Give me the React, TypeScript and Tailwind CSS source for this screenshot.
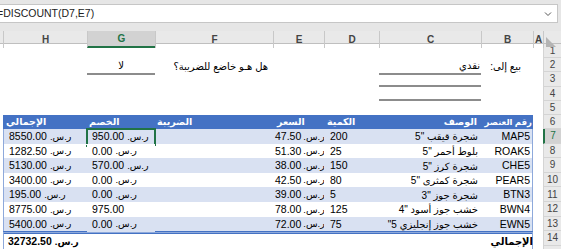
import React from 'react'

const GRID = 'grid grid-cols-[3px_84px_68px_118px_51px_55px_102px_52px_10px_18px]'
const FONT = { fontFamily: '"Liberation Sans", Arial, "DejaVu Sans", sans-serif' }
const AR = 'text-[10px]'

type Item = {
  id: string
  desc: string
  qty: string
  price: string
  disc: string
  discCur: boolean
  total: string
}

// descriptions are in logical order for an rtl run
const items: Item[] = [
  { id: 'MAP5', desc: 'شجرة قيقب "5', qty: '200', price: '47.50', disc: '950.00', discCur: true, total: '8550.00' },
  { id: 'ROAK5', desc: 'بلوط أحمر "5', qty: '25', price: '51.30', disc: '0.00', discCur: true, total: '1282.50' },
  { id: 'CHE5', desc: 'شجرة كرز "5', qty: '150', price: '38.00', disc: '570.00', discCur: true, total: '5130.00' },
  { id: 'PEAR5', desc: 'شجرة كمثرى "5', qty: '80', price: '42.50', disc: '0.00', discCur: true, total: '3400.00' },
  { id: 'BTN3', desc: 'شجرة جوز "3', qty: '5', price: '39.00', disc: '0.00', discCur: true, total: '195.00' },
  { id: 'BWN4', desc: 'خشب جوز أسود "4', qty: '125', price: '78.00', disc: '975.00', discCur: false, total: '8775.00' },
  { id: 'EWN5', desc: 'خشب جوز إنجليزي 5"', qty: '75', price: '72.00', disc: '0.00', discCur: true, total: '5400.00' },
]

function Money({ v, cur = true, bold = false, gap = 'gap-[3px]' }: { v: string; cur?: boolean; bold?: boolean; gap?: string }) {
  return (
    <span className={`flex items-center ${gap} ${bold ? 'font-bold' : ''}`}>
      <span>{v}</span>
      {cur && (
        <span dir="rtl" className="text-[9.5px]">
          ر.س.
        </span>
      )}
    </span>
  )
}

function RowHead({ n, active = false, h }: { n?: string; active?: boolean; h: string }) {
  return (
    <div
      className={`${h} flex items-center justify-center border-b border-l border-[#d4d4d4] text-[10px] ${
        active ? 'bg-[#d2d2d2] text-[#217346] border-l-2 border-l-[#217346]' : 'bg-[#e9e9e9] text-[#444]'
      }`}
    >
      {n}
    </div>
  )
}

function ColHead({ l, active = false }: { l: string; active?: boolean }) {
  return (
    <div
      className={`flex items-center justify-center border-l border-[#c8c8c8] text-[10px] font-bold ${
        active ? 'bg-[#d2d2d2] text-[#217346] border-b-2 border-b-[#217346]' : 'text-[#444]'
      }`}
    >
      {l}
    </div>
  )
}

// children must fill the nine sheet columns I..A
function Plain({ n, children }: { n: string; children?: React.ReactNode }) {
  return (
    <div className={`${GRID} h-[14.2px]`}>
      {children}
      <RowHead n={n} h="h-[14.2px]" />
    </div>
  )
}

function Underlined() {
  return (
    <>
      <div className="col-span-6" />
      <div className="border-b-2 border-[#8c8c8c]" />
      <div className="col-span-2" />
    </>
  )
}

export default function App() {
  return (
    <div className="w-[561px] h-[249px] overflow-hidden bg-white text-[10.5px] text-black" style={FONT}>
      {/* formula bar */}
      <div className="h-[31px] bg-[#e6e6e6] pt-[4px] pr-[3px]">
        <div className="h-[19px] bg-white border border-l-0 border-[#c6c6c6] flex items-center justify-between pr-[5px]">
          <span className="-ml-[3px] text-[10.5px] text-[#222]">=DISCOUNT(D7,E7)</span>
          <svg width="8" height="6" viewBox="0 0 8 6">
            <path d="M1 1.5 L4 4.5 L7 1.5" fill="none" stroke="#555" strokeWidth="1" />
          </svg>
        </div>
      </div>

      {/* column headers */}
      <div className={`${GRID} h-[13px] bg-[#e9e9e9] border-b border-[#bfbfbf]`}>
        <div />
        <ColHead l="H" />
        <ColHead l="G" active />
        <ColHead l="F" />
        <ColHead l="E" />
        <ColHead l="D" />
        <ColHead l="C" />
        <ColHead l="B" />
        <ColHead l="A" />
        <div className="relative border-l border-[#c8c8c8]">
          <svg className="absolute left-[2px] bottom-[1px]" width="10" height="10" viewBox="0 0 10 10">
            <path d="M0 10 L0 0 L10 10 Z" fill="#b4b4b4" />
          </svg>
        </div>
      </div>

      <Plain n="1">
        <div className="col-span-9" />
      </Plain>
      <Plain n="2">
        <div className="col-span-2" />
        <div className={`flex items-center justify-center border-b-2 border-[#8c8c8c] ${AR}`}>
          <span dir="rtl">لا</span>
        </div>
        <div className={`flex items-center justify-end pr-[5px] overflow-hidden whitespace-nowrap ${AR}`}>
          <span dir="rtl">هل هـو خاضع للضريبة؟</span>
        </div>
        <div />
        <div />
        <div className={`flex items-center justify-end pr-[1px] border-b-2 border-[#8c8c8c] ${AR}`}>
          <span dir="rtl">نقدي</span>
        </div>
        <div className={`flex items-center justify-end pr-[12px] whitespace-nowrap ${AR}`}>
          <span dir="rtl">بيع إلى:</span>
        </div>
        <div />
      </Plain>
      <Plain n="3">
        <Underlined />
      </Plain>
      <Plain n="4">
        <Underlined />
      </Plain>
      <Plain n="5">
        <div className="col-span-9" />
      </Plain>

      {/* table header */}
      <div className={`${GRID} h-[14px]`}>
        <div />
        <div className="col-span-7 grid grid-cols-[84px_68px_118px_51px_55px_102px_52px] bg-[#4472c4] text-white font-bold whitespace-nowrap text-[9.5px]">
          <div className="flex items-center pl-[3px]"><span dir="rtl">الإجمالي</span></div>
          <div className="flex items-center pl-[2px]"><span dir="rtl">الخصم</span></div>
          <div className="flex items-center pl-[2px]"><span dir="rtl">الضريبة</span></div>
          <div className="flex items-center pl-[4px]"><span dir="rtl">السعر</span></div>
          <div className="flex items-center pl-[3px]"><span dir="rtl">الكمية</span></div>
          <div className="flex items-center justify-end pr-[4px]"><span dir="rtl">الوصف</span></div>
          <div className="flex items-center justify-end pr-[1px] text-[8.5px]"><span dir="rtl">رقم العنصر</span></div>
        </div>
        <div />
        <RowHead n="6" h="h-[14px]" />
      </div>

      {items.map((it, i) => {
        const bg = i % 2 === 0 ? 'bg-[#d9e1f2]' : 'bg-white'
        const c = `${bg} border-b border-[#8ea9db] flex items-center whitespace-nowrap overflow-hidden`
        return (
          <div key={it.id} className={`${GRID} h-[14.6px]`}>
            <div />
            <div className={`${c} border-l pl-[5px]`}>
              <Money v={it.total} />
            </div>
            <div className={`${c} relative overflow-visible pl-[5px]`}>
              <Money v={it.disc} cur={it.discCur} />
              {i === 0 && (
                <>
                  <div className="absolute -left-[1px] -right-[1px] -top-[1px] -bottom-[1px] border-2 border-[#217346]" />
                  <div className="absolute -left-[2px] -bottom-[3px] w-[4px] h-[4px] bg-[#217346] border border-white" />
                </>
              )}
            </div>
            <div className={c} />
            <div className={`${c} pl-[2px]`}>
              <Money v={it.price} gap="gap-[2px]" />
            </div>
            <div className={`${c} pl-[6px]`}>{it.qty}</div>
            <div className={`${c} justify-end pr-[3px] ${AR}`}>
              <span dir="rtl">{it.desc}</span>
            </div>
            <div className={`${c} border-r justify-end pr-[2px]`}>{it.id}</div>
            <div />
            <RowHead n={String(7 + i)} active={i === 0} h="h-[14.6px]" />
          </div>
        )
      })}

      {/* total row */}
      <div className={`${GRID} h-[14.6px]`}>
        <div />
        <div className="col-span-7 grid grid-cols-[84px_68px_118px_51px_55px_102px_52px] border-t-[3px] border-double border-[#4472c4] border-l border-r border-l-[#8ea9db] border-r-[#8ea9db] border-b border-b-[#b4c6e7] font-bold whitespace-nowrap">
          <div className="flex items-center pl-[4px]">
            <Money v="32732.50" bold />
          </div>
          <div className="col-span-5" />
          <div className={`flex items-center justify-end pr-[1px] ${AR}`}>
            <span dir="rtl">الإجمالي</span>
          </div>
        </div>
        <div />
        <RowHead n="14" h="h-[14.6px]" />
      </div>
      <div className={`${GRID} h-[14px]`}>
        <div className="col-span-9" />
        <RowHead h="h-[14px]" />
      </div>
    </div>
  )
}
